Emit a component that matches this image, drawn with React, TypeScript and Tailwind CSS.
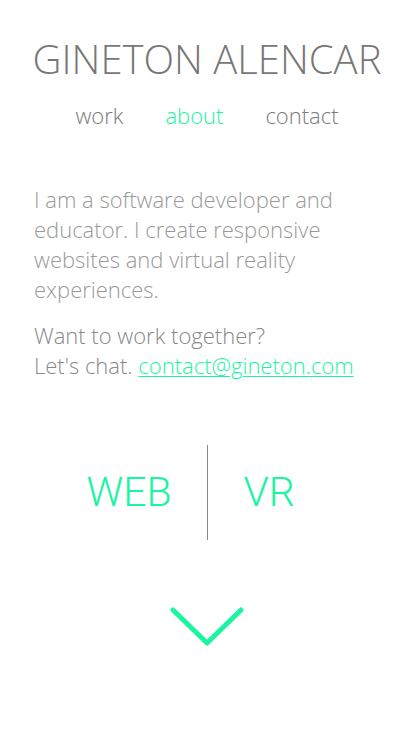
export default function App() {
  const links = [
    { label: "work", active: false },
    { label: "about", active: true },
    { label: "contact", active: false },
  ];

  return (
    <div className="min-h-[736px] w-full bg-white font-['Open_Sans',sans-serif] font-light">
      <header className="pt-[31px] text-center">
        <h1 className="text-[40px] leading-[56px] text-[#777]">
          GINETON ALENCAR
        </h1>
        <nav className="mt-[13px] flex justify-center gap-[42px] text-[22px] leading-[30px]">
          {links.map((l) => (
            <a
              key={l.label}
              href="#"
              className={l.active ? "text-[#1af5a2]" : "text-[#7a7a7a]"}
            >
              {l.label}
            </a>
          ))}
        </nav>
      </header>

      <section className="mt-[54px] px-[34px] text-[22px] leading-[30px] text-[#999]">
        <p>
          I am a software developer and educator. I create responsive websites
          and virtual reality experiences.
        </p>
        <p className="mt-[16px] text-[#888]">
          Want to work together?
          <br />
          Let's chat.{" "}
          <a href="#" className="text-[#1af5a2] underline underline-offset-2 decoration-1">
            contact@gineton.com
          </a>
        </p>
      </section>

      <div className="mt-[65px] flex items-center justify-center gap-[36px] font-['Roboto',sans-serif] font-light text-[41px] text-[#1af5a2]">
        <span className="w-[84px] text-right">WEB</span>
        <div className="h-[95px] w-px bg-[#888]" />
        <span className="w-[84px] text-left">VR</span>
      </div>

      <div className="mt-[65px] flex justify-center">
        <svg width="84" height="46" viewBox="0 0 84 46" fill="none">
          <path
            d="M8 5 L42 38 L76 5"
            stroke="#1af5a2"
            strokeWidth="5"
            strokeLinecap="round"
            strokeLinejoin="round"
          />
        </svg>
      </div>
    </div>
  );
}
